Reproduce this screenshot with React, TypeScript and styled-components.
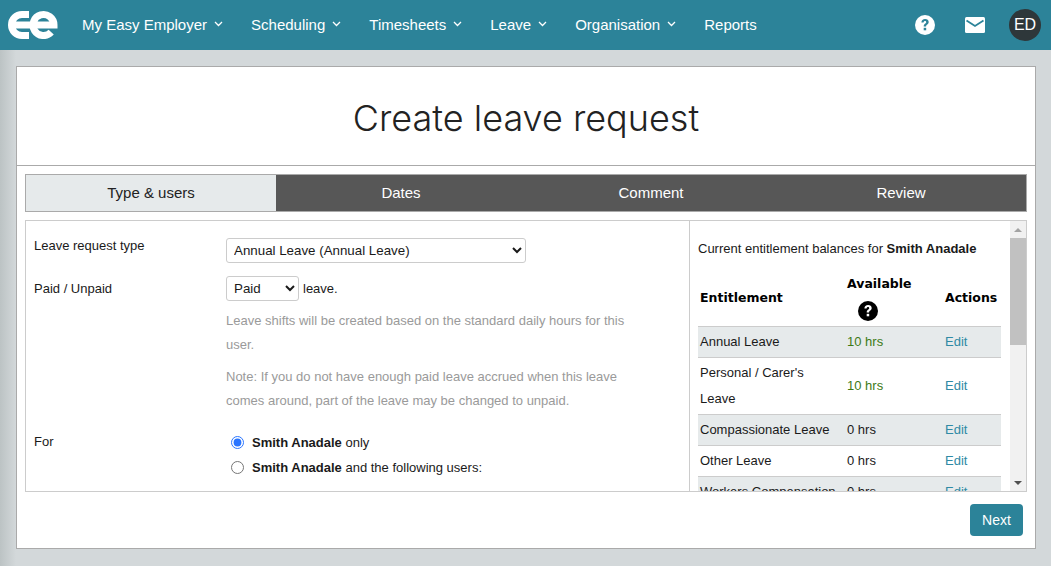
import React from "react";
import styled, { createGlobalStyle } from "styled-components";

const Global = createGlobalStyle`
  html, body { margin: 0; padding: 0; height: 100%; overflow: hidden; }
  body { background: #d3d8da; font-family: "Liberation Sans", Arial, sans-serif; color: #1a1a1a; }
  * { box-sizing: border-box; }
`;

const Page = styled.div`
  width: 1051px;
  height: 566px;
  display: flex;
  flex-direction: column;
  background: linear-gradient(90deg, #bcc3c4 0, #d3d8da 16px);
`;

const TopBar = styled.header`
  height: 50px;
  flex: none;
  background: #2c8399;
  display: flex;
  align-items: center;
  color: #fff;
  padding: 0 10px 0 8px;
`;

const Logo = styled.svg`
  width: 50px;
  height: 28px;
  flex: none;
  fill: none;
  stroke: #fff;
  stroke-width: 7;
`;

const Nav = styled.nav`
  display: flex;
  align-items: center;
  margin-left: 24px;
  padding-bottom: 2px;
  gap: 28px;
  flex: 1;
`;

const NavItem = styled.span`
  display: inline-flex;
  align-items: center;
  gap: 7px;
  font-size: 15px;
  white-space: nowrap;
`;

const BarIcons = styled.div`
  display: flex;
  align-items: center;
`;

const MailIcon = styled.svg`
  width: 20px;
  height: 16px;
  margin-left: 30px;
`;

const Avatar = styled.div`
  width: 32px;
  height: 32px;
  border-radius: 50%;
  background: #2e373a;
  margin-left: 24px;
  display: flex;
  align-items: center;
  justify-content: center;
  font-size: 16px;
`;

const Card = styled.main`
  margin: 16px 15px 0 16px;
  height: 483px;
  background: #fff;
  border: 1px solid #aaa;
  display: flex;
  flex-direction: column;
`;

const TitleBlock = styled.div`
  height: 99px;
  flex: none;
  border-bottom: 1px solid #aaa;
  padding-top: 3px;
  display: flex;
  align-items: center;
  justify-content: center;
`;

const Title = styled.h1`
  margin: 0;
  font-family: Inter, sans-serif;
  font-weight: 300;
  font-size: 36px;
  color: #222;
`;

const Tabs = styled.div`
  margin: 8px 8px 0;
  height: 38px;
  flex: none;
  display: grid;
  grid-template-columns: repeat(4, 1fr);
  border: 1px solid #aaa;
  background: #575757;
`;

const Tab = styled.div<{ $active?: boolean }>`
  display: flex;
  align-items: center;
  justify-content: center;
  font-size: 15px;
  padding-bottom: 1px;
  background: ${(p) => (p.$active ? "#e6eaeb" : "transparent")};
  color: ${(p) => (p.$active ? "#222" : "#fff")};
`;

const Body = styled.section`
  margin: 8px 8px 0;
  height: 272px;
  flex: none;
  border: 1px solid #ccc;
  display: flex;
  overflow: hidden;
`;

const FormCol = styled.div`
  width: 664px;
  flex: none;
  border-right: 1px solid #ccc;
  padding: 17px 8px 0;
  overflow: hidden;
  font-size: 13px;
`;

const FormRow = styled.div<{ $h: number }>`
  display: grid;
  grid-template-columns: 192px 1fr;
  height: ${(p) => p.$h}px;
`;

const Label = styled.div<{ $top?: number }>`
  line-height: 16px;
  padding-top: ${(p) => p.$top ?? 0}px;
`;

const Inline = styled.div`
  display: flex;
  align-items: center;
  gap: 4px;
  height: 25px;
`;

const Select = styled.select<{ $w: number }>`
  width: ${(p) => p.$w}px;
  height: 25px;
  border: 1px solid #ccc;
  border-radius: 3px;
  background: #fff;
  font-family: "Liberation Sans", Arial, sans-serif;
  font-size: 13.33px;
  color: #1a1a1a;
  padding: 0 3px;
`;

const Hint = styled.p`
  margin: 8px 0 0;
  width: 410px;
  color: #9a9a9a;
  font-size: 13px;
  line-height: 24px;
`;

const RadioRow = styled.label`
  display: flex;
  align-items: center;
  gap: 8px;
  height: 25px;
  font-size: 13px;
`;

const Radio = styled.input`
  margin: 0 0 0 5px;
  width: 13px;
  height: 13px;
  accent-color: #2a75ff;
`;

const SideWrap = styled.div`
  flex: 1;
  min-width: 0;
  display: flex;
`;

const SideCol = styled.div`
  flex: 1;
  min-width: 0;
  overflow: hidden;
  padding: 20px 8px 0 8px;
  font-size: 13px;
`;

const SideIntro = styled.div`
  line-height: 16px;
  margin-bottom: 11px;
  white-space: nowrap;
`;

const Scrollbar = styled.div`
  width: 16px;
  flex: none;
  background: #f1f1f1;
  display: flex;
  flex-direction: column;
`;

const ScrollArrow = styled.div<{ $down?: boolean }>`
  height: 17px;
  flex: none;
  display: flex;
  align-items: center;
  justify-content: center;
  &::before {
    content: "";
    border-left: 4px solid transparent;
    border-right: 4px solid transparent;
    ${(p) =>
      p.$down ? "border-top: 4px solid #505050;" : "border-bottom: 4px solid #a3a3a3;"}
  }
`;

const ScrollThumb = styled.div`
  height: 107px;
  flex: none;
  background: #c1c1c1;
`;

const ScrollTrack = styled.div`
  flex: 1;
`;

const Table = styled.table`
  width: 303px;
  border-collapse: collapse;
  table-layout: fixed;
  font-size: 13px;
`;

const Th = styled.th<{ $w: number }>`
  width: ${(p) => p.$w}px;
  text-align: left;
  padding: 1px 2px 0;
  height: 58px;
  font-family: "DejaVu Sans", sans-serif;
  font-size: 12.5px;
  font-weight: 700;
  color: #000;
  vertical-align: middle;
`;

const ThInner = styled.div`
  display: flex;
  flex-direction: column;
  align-items: flex-start;
  padding-top: 3px;
  gap: 9px;
  line-height: 16px;
`;

const HelpSlot = styled.div`
  margin-left: 11px;
  height: 20px;
`;

const Row = styled.tr<{ $odd: boolean }>`
  background: ${(p) => (p.$odd ? "#e6eaeb" : "#fff")};
  border-top: 1px solid #ccc;
  border-bottom: 1px solid #ccc;
`;

const Td = styled.td`
  padding: 2px;
  line-height: 26px;
  &:first-child { padding-right: 8px; }
`;

const Amount = styled.span<{ $pos: boolean }>`
  color: ${(p) => (p.$pos ? "#3d7a16" : "#1a1a1a")};
`;

const EditLink = styled.a`
  color: #2f8aa5;
`;

const Footer = styled.div`
  flex: 1;
  display: flex;
  justify-content: flex-end;
  align-items: flex-start;
  padding: 12px 12px 0 0;
`;

const NextButton = styled.button`
  width: 53px;
  height: 32px;
  border: none;
  border-radius: 4px;
  background: #2c8399;
  color: #fff;
  font-family: "Liberation Sans", Arial, sans-serif;
  font-size: 14px;
`;

const Chev = () => (
  <svg width="9" height="6" viewBox="0 0 9 6" fill="none" stroke="#fff" strokeWidth="1.3">
    <path d="M1 1l3.5 3.5L8 1" />
  </svg>
);

const rows = [
  ["Annual Leave", "10 hrs", true],
  ["Personal / Carer's Leave", "10 hrs", true],
  ["Compassionate Leave", "0 hrs", false],
  ["Other Leave", "0 hrs", false],
  ["Workers Compensation", "0 hrs", false],
] as const;

const Help = ({ size, bg, fg }: { size: number; bg: string; fg: string }) => (
  <svg width={size} height={size} viewBox="0 0 20 20">
    <circle cx="10" cy="10" r="10" fill={bg} />
    <path d="M6.4 7.500c0-2.200 1.600-3.500 3.700-3.500 2.100 0 3.600 1.300 3.600 3.100 0 2.500-2.600 2.500-2.600 4.500H8.700c0-3.100 2.500-3.100 2.500-4.400 0-.7-.5-1.100-1.200-1.100-.8 0-1.300.5-1.400 1.500z" fill={fg} />
    <rect x="8.700" y="12.800" width="2.500" height="2.500" fill={fg} />
  </svg>
);

export default function App() {
  return (
    <Page>
      <Global />
      <TopBar>
        <Logo viewBox="0 0 50 28">
          <path d="M21 3.500H14A10.500 10.500 0 0 0 14 24.500H21M6 14H22" />
          <path d="M26 14H46A10.500 10.500 0 1 0 43.200 21.200" />
        </Logo>
        <Nav>
          <NavItem>My Easy Employer <Chev /></NavItem>
          <NavItem>Scheduling <Chev /></NavItem>
          <NavItem>Timesheets <Chev /></NavItem>
          <NavItem>Leave <Chev /></NavItem>
          <NavItem>Organisation <Chev /></NavItem>
          <NavItem>Reports</NavItem>
        </Nav>
        <BarIcons>
          <Help size={20} bg="#fff" fg="#2c8399" />
          <MailIcon viewBox="0 0 20 16">
            <rect width="20" height="16" rx="1.500" fill="#fff" />
            <path d="M1.500 3.500L10 9l8.500-5.500" fill="none" stroke="#2c8399" strokeWidth="1.800" />
          </MailIcon>
          <Avatar>ED</Avatar>
        </BarIcons>
      </TopBar>
      <Card>
        <TitleBlock>
          <Title>Create leave request</Title>
        </TitleBlock>
        <Tabs>
          <Tab $active>Type &amp; users</Tab>
          <Tab>Dates</Tab>
          <Tab>Comment</Tab>
          <Tab>Review</Tab>
        </Tabs>
        <Body>
          <FormCol>
            <FormRow $h={38}>
              <Label>Leave request type</Label>
              <Inline>
                <Select $w={300} defaultValue="a">
                  <option value="a">Annual Leave (Annual Leave)</option>
                </Select>
              </Inline>
            </FormRow>
            <FormRow $h={154}>
              <Label $top={5}>Paid / Unpaid</Label>
              <div>
                <Inline>
                  <Select $w={73} defaultValue="p">
                    <option value="p">Paid</option>
                  </Select>
                  leave.
                </Inline>
                <Hint>Leave shifts will be created based on the standard daily hours for this user.</Hint>
                <Hint>Note: If you do not have enough paid leave accrued when this leave comes around, part of the leave may be changed to unpaid.</Hint>
              </div>
            </FormRow>
            <FormRow $h={50}>
              <Label $top={4}>For</Label>
              <div>
                <RadioRow>
                  <Radio type="radio" name="for" defaultChecked />
                  <span><b>Smith Anadale</b> only</span>
                </RadioRow>
                <RadioRow>
                  <Radio type="radio" name="for" />
                  <span><b>Smith Anadale</b> and the following users:</span>
                </RadioRow>
              </div>
            </FormRow>
          </FormCol>
          <SideWrap>
            <SideCol>
              <SideIntro>Current entitlement balances for <b>Smith Anadale</b></SideIntro>
              <Table>
                <thead>
                  <tr>
                    <Th $w={147}>Entitlement</Th>
                    <Th $w={98}>
                      <ThInner>
                        Available
                        <HelpSlot><Help size={20} bg="#000" fg="#fff" /></HelpSlot>
                      </ThInner>
                    </Th>
                    <Th $w={58}>Actions</Th>
                  </tr>
                </thead>
                <tbody>
                  {rows.map(([name, amt, pos], i) => (
                    <Row key={name} $odd={i % 2 === 0}>
                      <Td>{name}</Td>
                      <Td><Amount $pos={pos}>{amt}</Amount></Td>
                      <Td><EditLink>Edit</EditLink></Td>
                    </Row>
                  ))}
                </tbody>
              </Table>
            </SideCol>
            <Scrollbar>
              <ScrollArrow />
              <ScrollThumb />
              <ScrollTrack />
              <ScrollArrow $down />
            </Scrollbar>
          </SideWrap>
        </Body>
        <Footer>
          <NextButton>Next</NextButton>
        </Footer>
      </Card>
    </Page>
  );
}
